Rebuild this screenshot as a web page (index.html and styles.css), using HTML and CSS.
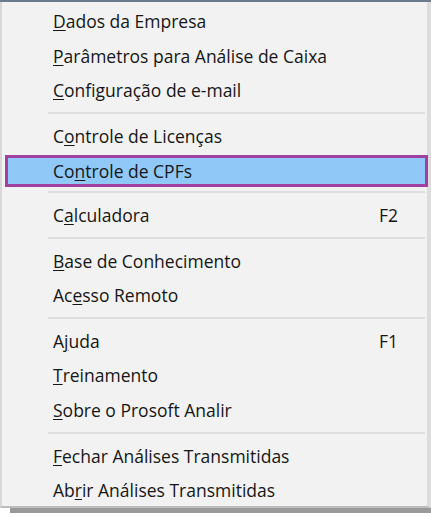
FILE: index.html
```html
<!DOCTYPE html>
<html lang="pt">
<head>
    <meta charset="UTF-8">
    <title>Menu</title>
    <link rel="stylesheet" href="styles.css">
</head>
<body>
    <div class="topbar"></div>
    <div class="menu">
        <div class="item"><span><u>D</u>ados da Empresa</span></div>
        <div class="item"><span><u>P</u>arâmetros para Análise de Caixa</span></div>
        <div class="item"><span><u>C</u>onfiguração de e-mail</span></div>
        <div class="sep"></div>
        <div class="item"><span>C<u>o</u>ntrole de Licenças</span></div>
        <div class="item active"><span>Co<u>n</u>trole de CPFs</span></div>
        <div class="sep"></div>
        <div class="item"><span>C<u>a</u>lculadora</span><span class="key">F2</span></div>
        <div class="sep"></div>
        <div class="item"><span><u>B</u>ase de Conhecimento</span></div>
        <div class="item"><span>Ac<u>e</u>sso Remoto</span></div>
        <div class="sep"></div>
        <div class="item"><span>A<u>j</u>uda</span><span class="key">F1</span></div>
        <div class="item"><span><u>T</u>reinamento</span></div>
        <div class="item"><span><u>S</u>obre o Prosoft Analir</span></div>
        <div class="sep"></div>
        <div class="item"><span><u>F</u>echar Análises Transmitidas</span></div>
        <div class="item"><span>Ab<u>r</u>ir Análises Transmitidas</span></div>
    </div>
    <div class="shadow"></div>
</body>
</html>
```

FILE: styles.css
```css
body {
    margin: 0;
    background-color: #ffffff;
    font-family: "Open Sans", "Noto Sans", sans-serif;
    width: 431px;
    height: 517px;
    overflow: hidden;
}

.topbar {
    height: 2px;
    background-color: #6b7a8c;
}

.menu {
    background-color: #f2f2f2;
    border-left: 2px solid #d8d8d8;
    border-right: 4px solid #dcdcdc;
    border-bottom: 2px solid #bdbdbd;
    padding: 2px 0 3px 3px;
    height: 506px;
    box-sizing: border-box;
}

.item {
    display: flex;
    justify-content: space-between;
    align-items: center;
    height: 34.6px;
    padding: 0 27px 0 45px;
    font-size: 17.5px;
    color: #161616;
    box-sizing: border-box;
    border: 3px solid transparent;
    margin-right: -1px;
}

.item u {
    text-underline-offset: 2px;
    text-decoration-thickness: 1px;
}

.item.active {
    background-color: #90c8f8;
    border-color: #a040a0;
    height: 32px;
    margin: 1.3px -1px 1.3px 0;
}

.sep {
    height: 2px;
    background-color: #dedede;
    margin: 4.5px 2px 4.5px 43px;
}

.shadow {
    height: 5px;
    margin: 0 0 0 10px;
    background-color: #9a9a9a;
}
```
